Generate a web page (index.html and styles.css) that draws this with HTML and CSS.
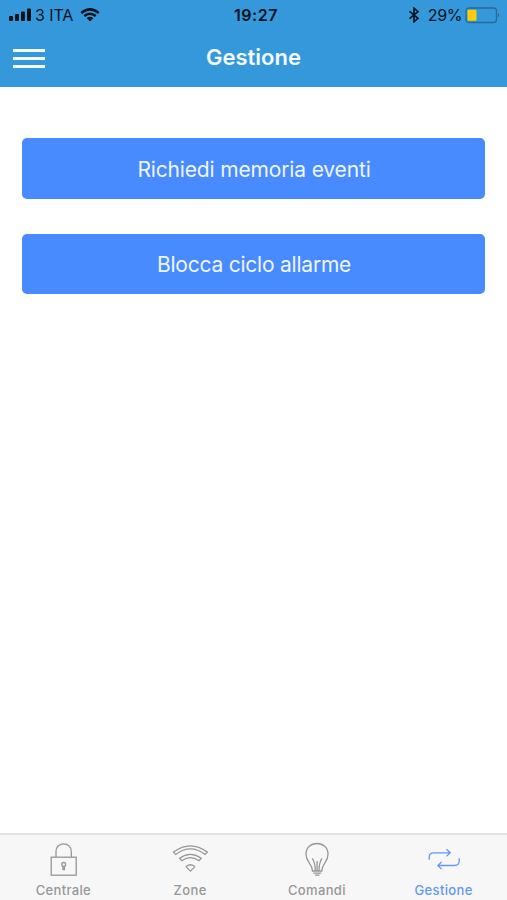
FILE: index.html
```html
<!DOCTYPE html>
<html lang="it">
<head>
<meta charset="utf-8">
<meta name="viewport" content="width=device-width, initial-scale=1">
<title>Gestione</title>
<link rel="stylesheet" href="styles.css">
</head>
<body>
<div class="app">
  <header class="header">
    <div class="status">
      <div class="status-left">
        <svg class="signal" width="24" height="14" viewBox="0 0 24 14"><rect x="0" y="8" width="4" height="5" rx="1"/><rect x="6" y="6" width="4" height="7" rx="1"/><rect x="12" y="3.500" width="4" height="9.500" rx="1"/><rect x="18" y="0.500" width="4" height="12.500" rx="1"/></svg>
        <span class="carrier">3 ITA</span>
        <svg class="wifi" width="20" height="14" viewBox="0 0 20 14"><path d="M1.300 5Q10-2.300 18.700 5M4.300 8Q10 3.400 15.700 8" fill="none" stroke="#06131c" stroke-width="2.500"/><path d="M6.700 10Q10 7.400 13.300 10L10 13.400Z"/></svg>
      </div>
      <span class="clock">19:27</span>
      <div class="status-right">
        <svg width="12" height="16" viewBox="0 0 12 16"><path d="M1.500 4.300L10 11.300 6 14.800V1.200L10 4.700 1.500 11.700" fill="none" stroke="#06131c" stroke-width="1.600"/></svg>
        <span class="percent">29%</span>
        <svg class="battery" width="36" height="17" viewBox="0 0 36 17"><rect x="1" y="1" width="30.500" height="14.500" rx="3" fill="none" stroke="#276a98" stroke-width="1.300"/><rect x="2.500" y="2.800" width="9" height="11" rx="1" fill="#ffcc05"/><path d="M33 6Q35.500 8.200 33 10.500Z" fill="#276a98"/></svg>
      </div>
    </div>
    <div class="toolbar">
      <button class="menu" aria-label="Menu"><i></i><i></i><i></i></button>
      <h1>Gestione</h1>
    </div>
  </header>
  <main class="content">
    <button class="action"><span class="memory">Richiedi memoria eventi</span></button>
    <button class="action"><span class="cycle">Blocca ciclo allarme</span></button>
  </main>
  <nav class="tabs">
    <a class="tab">
      <svg class="icon" viewBox="0 0 40 40"><rect x="8.200" y="17.200" width="25" height="18"/><path d="M13 17V11.500C13 1.200 28.300 1.200 28.300 11.500V17M20 26.300V29.500H21.400V26.300"/><circle cx="20.700" cy="24.400" r="1.900"/></svg>
      <span>Centrale</span>
    </a>
    <a class="tab">
      <svg class="icon" viewBox="0 0 40 40"><path d="M3.500 12.100Q20.400-.5 37.300 12.100L35.100 14.400Q20.400 3.400 5.700 14.400ZM9.600 18.300Q20.400 10.600 31.200 18.300L28.900 20.700Q20.400 14.700 11.900 20.700ZM16.300 26.300Q20.400 23.200 24.500 26.300V27.100L20.400 31.100 16.300 27.100Z"/></svg>
      <span>Zone</span>
    </a>
    <a class="tab">
      <svg class="icon" viewBox="0 0 40 40"><path d="M15.500 31C15.500 23 9 23 9 14.300C9 7.500 14 3.500 20 3.500S31 7.500 31 14.300C31 23 24.800 23 24.800 31ZM16.300 33.200H24.200M18 35.200H22.500M18.300 30.500C18.300 24 17.500 21.500 15.300 18.300M22 30.500C22 24 22.800 21.500 25 18.300M20.100 30.500V21"/></svg>
      <span>Comandi</span>
    </a>
    <a class="tab active">
      <svg class="icon" viewBox="0 0 40 40"><path d="M5.200 19.700V17Q5.200 12.800 9.800 12.800H25.800M22.500 9.200L26.200 12.800 22.500 16.400M35.200 18.200V21Q35.200 25.500 30.500 25.500H14.500M17.600 21.900L13.900 25.500 17.600 29.100"/></svg>
      <span>Gestione</span>
    </a>
  </nav>
</div>
</body>
</html>
```

FILE: styles.css
```css
* {
  box-sizing: border-box;
}

body {
  margin: 0;
  background: #fff;
  font-family: Inter, "Liberation Sans", sans-serif;
}

button {
  border: 0;
  padding: 0;
  font: inherit;
}

.app {
  display: flex;
  flex-direction: column;
  height: 900px;
}

.header {
  height: 87px;
  background: #3498db;
}

.status {
  display: grid;
  grid-template-columns: 1fr auto 1fr;
  align-items: center;
  height: 30px;
  padding: 0 6px 0 9px;
  color: #06131c;
  fill: #06131c;
  font-size: 16px;
}

.status-left,
.status-right {
  display: flex;
  align-items: center;
}

.status-right {
  justify-content: flex-end;
}

.carrier {
  margin-left: 2px;
  width: 45px;
  white-space: nowrap;
  letter-spacing: -0.1px;
}

.clock {
  padding-left: 2px;
  font-weight: 600;
  letter-spacing: 0.5px;
}

.percent {
  margin: 0 3px 0 8px;
  letter-spacing: -0.4px;
}

.toolbar {
  display: grid;
  grid-template-columns: 1fr auto 1fr;
  align-items: center;
  height: 55px;
}

.menu {
  display: flex;
  flex-direction: column;
  gap: 5px;
  width: 32px;
  margin: 1px 0 0 13px;
  background: none;
}

.menu i {
  height: 3px;
  background: #f3faff;
}

h1 {
  margin: 0 0 2px;
  color: #f3faff;
  font-size: 22px;
  font-weight: 600;
}

.content {
  flex: 1;
  display: flex;
  flex-direction: column;
  gap: 35px;
  padding: 51px 22px 0;
}

.action {
  height: 60.5px;
  padding: 2px 0 0 1px;
  border-radius: 5px;
  background: #488aff;
  color: #eff6ff;
  font-size: 21px;
}

.memory {
  letter-spacing: -0.15px;
}

.cycle {
  letter-spacing: -0.22px;
}

.tabs {
  display: grid;
  grid-template-columns: repeat(4, 1fr);
  height: 67px;
  border-top: 2px solid #e3e3e3;
  background: #f7f7f7;
}

.tab {
  display: flex;
  flex-direction: column;
  align-items: center;
  padding-top: 5px;
  color: #979797;
  font-size: 13px;
  font-weight: 500;
  line-height: 20px;
  letter-spacing: 0.35px;
}

.tab.active {
  color: #6298f5;
}

.icon {
  width: 40px;
  height: 40px;
  fill: none;
  stroke: currentColor;
  stroke-width: 1.3;
}
```
